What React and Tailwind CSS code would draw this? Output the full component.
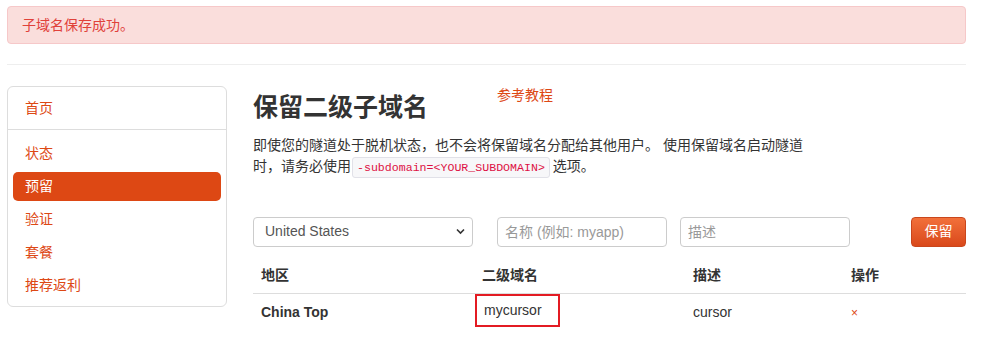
import React from 'react';

const font = { fontFamily: '"Liberation Sans", "Noto Sans CJK SC", sans-serif' };

const navItems = ['状态', '预留', '验证', '套餐', '推荐返利'];

const Sidebar = () => (
    <div className="self-start w-[220px] shrink-0 border border-[#dddddd] rounded-[6px] px-[5px] pb-[6px]">
        <div className="-mx-[5px] px-[5px] pt-[7px] pb-[6px] border-b border-[#dddddd]">
            <div className="h-[29px] flex items-center px-[12px] text-[#dd4814] text-[14px]">首页</div>
        </div>
        <div className="flex flex-col gap-[4px] pt-[9px]">
            {navItems.map((item) => (
                <div
                    key={item}
                    className={
                        item === '预留'
                            ? 'h-[29px] flex items-center px-[12px] rounded-[5px] bg-[#dd4814] text-white text-[14px]'
                            : 'h-[29px] flex items-center px-[12px] text-[#dd4814] text-[14px]'
                    }
                >
                    {item}
                </div>
            ))}
        </div>
    </div>
);

export default function App() {
    return (
        <div className="w-[981px] h-[353px] bg-white text-[#333333] overflow-hidden" style={font}>
            <div className="ml-[7px] w-[959px] pt-[6px]">
                {/* 提示 */}
                <div className="h-[38px] flex items-center px-[14px] bg-[#fadedc] border border-[#f6c8c9] rounded-[4px] text-[#e0413a] text-[14px]">
                    子域名保存成功。
                </div>

                <div className="mt-[20px] border-t border-[#eeeeee]"></div>

                <div className="flex mt-[21px] gap-[26px]">
                    <Sidebar />

                    <div className="flex-1">
                        <div className="flex items-start">
                            <h1 className="text-[25px] font-bold leading-[30px] mt-[6px] text-[#333333]">保留二级子域名</h1>
                            <a className="ml-[69px] -mt-[1px] text-[14px] leading-[20px] text-[#dd4814]">参考教程</a>
                        </div>

                        <p className="mt-[13px] w-[556px] text-[14px] leading-[21px] text-[#333333]">
                            <span>即使您的隧道处于脱机状态，也不会将保留域名分配给其他用户。 使用保留域名启动隧道</span>
                            <span>时，请务必使用</span>
                            <code
                                className="inline-block align-middle ml-[1px] mr-[3px] px-[4px] leading-[19px] text-[11.6px] text-[#dd1144] bg-[#f7f7f9] border border-[#e1e1e8] rounded-[3px]"
                                style={{ fontFamily: '"Liberation Mono", monospace' }}
                            >
                                -subdomain=&lt;YOUR_SUBDOMAIN&gt;
                            </code>
                            <span>选项。</span>
                        </p>

                        {/* 表单 */}
                        <div className="flex items-center mt-[39px]">
                            <div className="relative w-[220px] h-[30px]">
                                <select className="appearance-none w-full h-full border border-[#cccccc] rounded-[4px] pl-[11px] text-[14px] text-[#555555] bg-white">
                                    <option>United States</option>
                                </select>
                                <svg className="absolute right-[8px] top-[11px] pointer-events-none" width="9" height="7" viewBox="0 0 9 7">
                                    <path d="M1 1.5 L4.5 5 L8 1.5" fill="none" stroke="#333" strokeWidth="1.6" />
                                </svg>
                            </div>
                            <input
                                className="ml-[24px] w-[170px] h-[30px] border border-[#cccccc] rounded-[4px] px-[7px] text-[14px] placeholder:text-[#999999]"
                                placeholder="名称 (例如: myapp)"
                            />
                            <input
                                className="ml-[13px] w-[170px] h-[30px] border border-[#cccccc] rounded-[4px] px-[7px] text-[14px] placeholder:text-[#999999]"
                                placeholder="描述"
                            />
                            <button className="ml-auto w-[55px] h-[30px] rounded-[4px] text-white text-[14px] bg-gradient-to-b from-[#f2703a] to-[#d9481a] border border-[#c9461c]">
                                保留
                            </button>
                        </div>

                        {/* 表格 */}
                        <table className="mt-[11px] w-full text-[14px] border-collapse">
                            <thead>
                                <tr className="border-b border-[#dddddd]">
                                    <th className="w-[221px] text-left font-bold px-[8px] h-[36px]">地区</th>
                                    <th className="w-[211px] text-left font-bold px-[8px]">二级域名</th>
                                    <th className="w-[158px] text-left font-bold px-[8px]">描述</th>
                                    <th className="text-left font-bold px-[8px]">操作</th>
                                </tr>
                            </thead>
                            <tbody>
                                <tr>
                                    <td className="px-[8px] h-[37px] font-bold">China Top</td>
                                    <td className="p-0 align-top">
                                        <div className="ml-[1px] w-[85px] h-[33px] border-2 border-[#e31b23] flex items-center pl-[7px]">mycursor</div>
                                    </td>
                                    <td className="px-[8px]">cursor</td>
                                    <td className="px-[8px] text-[#dd4814] text-[12px]">×</td>
                                </tr>
                            </tbody>
                        </table>
                    </div>
                </div>
            </div>
        </div>
    );
}
